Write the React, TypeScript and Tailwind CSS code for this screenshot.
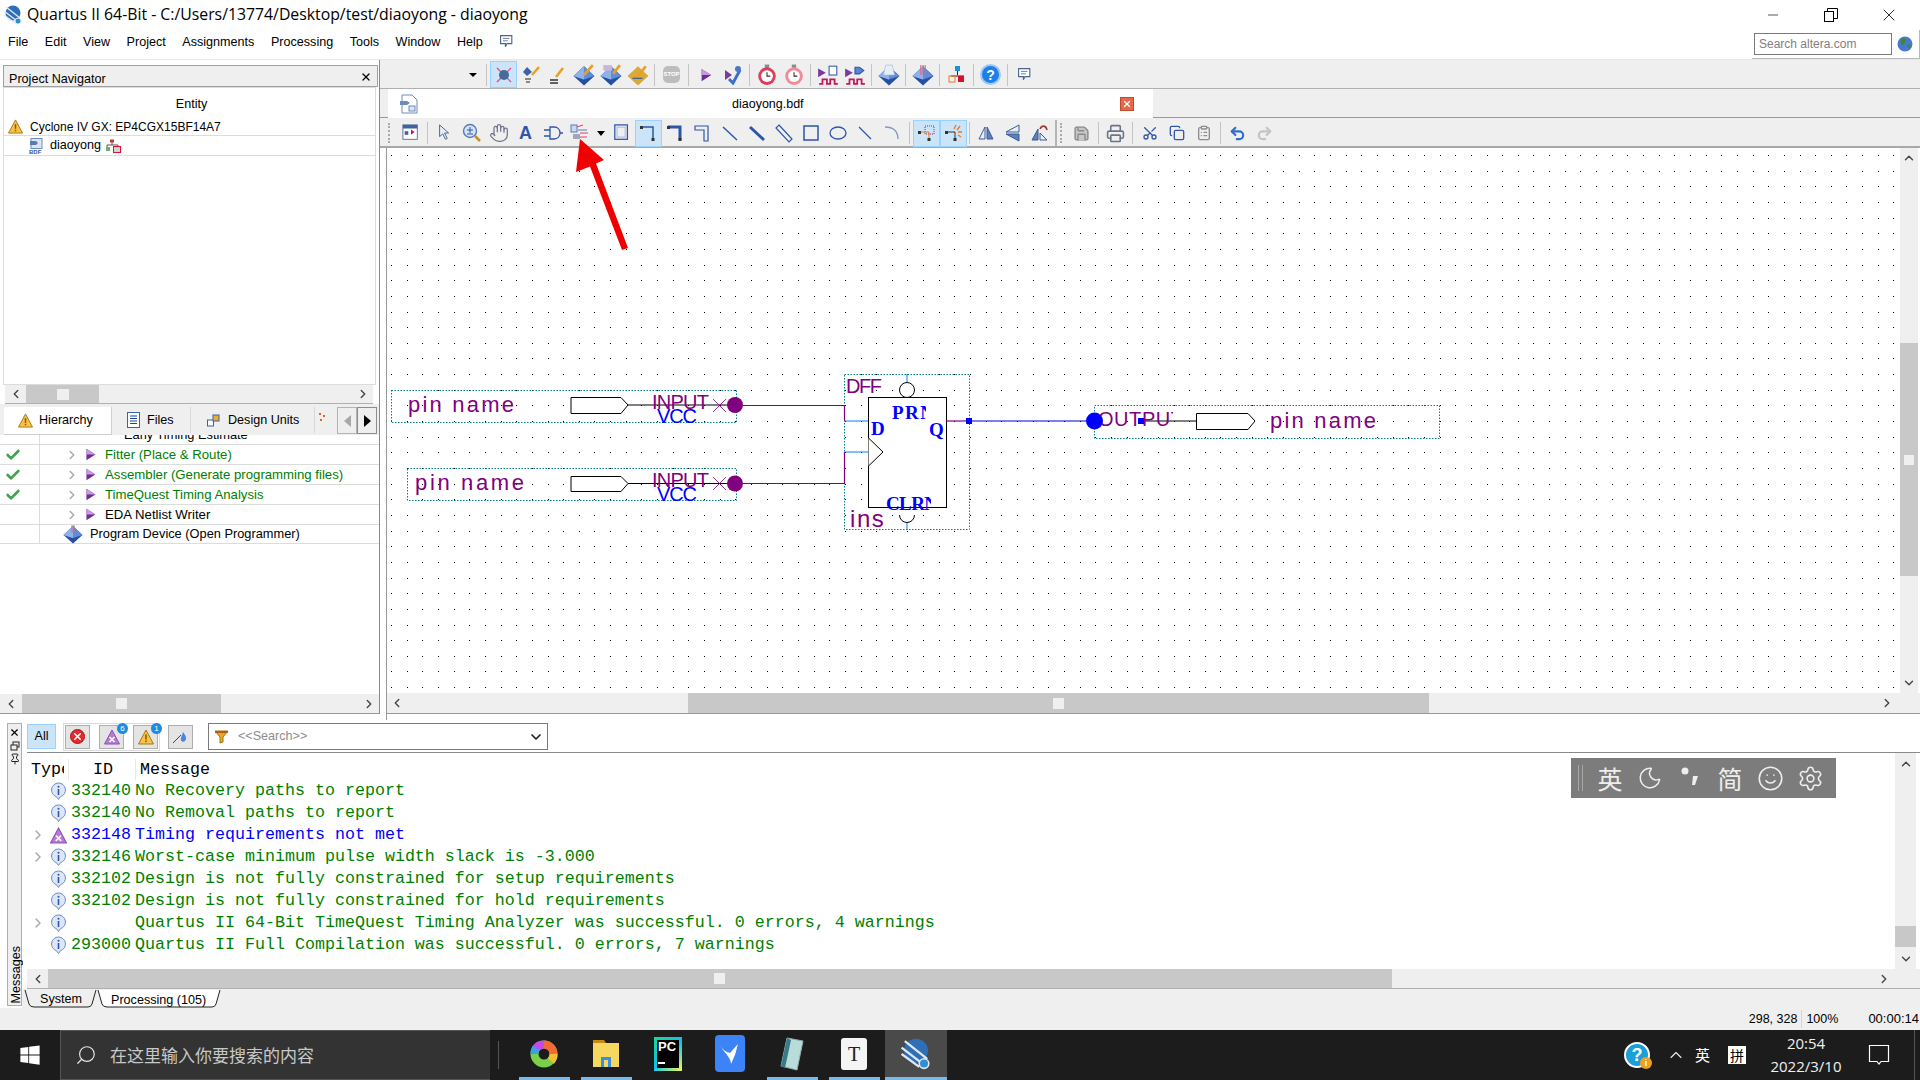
import { Hand, Printer, Scissors, Copy, ClipboardList, Undo2, Redo2, Save, Moon, Smile, Settings, Search, ChevronLeft, ChevronRight, ChevronUp, ChevronDown, X, Minus, Pin, Check } from "lucide-react";
import { FaWindows } from "react-icons/fa";
import type { ReactNode } from "react";

const UI = "font-['Liberation_Sans',sans-serif]";

function Sep() {
  return <div className="w-px h-[22px] bg-[#c4c4c4] mx-[3px] shrink-0" />;
}

function Slot({ children, on, w = "w-[27px]" }: { children: ReactNode; on?: boolean; w?: string }) {
  return (
    <div className={`${w} h-[27px] flex items-center justify-center shrink-0 ${on ? "bg-[#cce4f7] border border-[#99d1ff]" : ""}`}>
      {children}
    </div>
  );
}

function Svg({ children, s = 20 }: { children: ReactNode; s?: number }) {
  return (
    <svg width={s} height={s} viewBox="0 0 20 20" fill="none">
      {children}
    </svg>
  );
}

function Gem({ top, s = 22 }: { top?: ReactNode; s?: number }) {
  return (
    <Svg s={s}>
      <polygon points="10,2 19.500,11 10,19.500 .5,11" fill="#24509f" />
      <polygon points="10,2 19.500,11 10,14 .5,11" fill="#5f8ddc" />
      <polygon points="10,2 10,14 .5,11" fill="#8fb2ea" />
      {top}
    </Svg>
  );
}

function PlayTri({ s = 16 }: { s?: number }) {
  return (
    <svg width={s} height={s} viewBox="0 0 16 16">
      <polygon points="3,1 14,8 3,15" fill="#6d2f94" />
      <polygon points="3,1 14,8 3,8" fill="#c79ae0" />
    </svg>
  );
}

function Clock({ pale }: { pale?: boolean }) {
  return (
    <Svg s={22}>
      <rect x="8" y="0.500" width="4" height="3" fill="#8a8a8a" />
      <circle cx="10" cy="11" r="8" fill={pale ? "#f28a9a" : "#d8405c"} />
      <circle cx="10" cy="11" r="5.400" fill="#fff" />
      <path d="M10 7.500V11H13" stroke="#333" />
    </Svg>
  );
}

function Wave({ children }: { children: ReactNode }) {
  return (
    <Svg s={22}>
      <polygon points="1,4 8,8 1,12" fill="#7a3aa0" />
      {children}
      <path d="M2 18h3v-4h4v4h3v-4h4v4h3" stroke="#c2185b" strokeWidth="1.600" />
    </Svg>
  );
}

function SchemeLine({ kind }: { kind: number }) {
  const blue = "#2f55a8";
  return (
    <Svg>
      {kind === 0 && <path d="M2 4H14V17" stroke={blue} strokeWidth="1.500" />}
      {kind === 1 && <path d="M2 4H14V17" stroke={blue} strokeWidth="3" />}
      {kind === 2 && <path d="M2 3H15V18H11V7H2Z" stroke={blue} strokeWidth="1.200" />}
      {kind === 3 && <path d="M3 4L17 17" stroke={blue} strokeWidth="1.500" />}
      {kind === 4 && <path d="M3 4L17 17" stroke={blue} strokeWidth="3" />}
      {kind === 5 && <path d="M5 2L18 16L15 19L2 5Z" stroke={blue} strokeWidth="1.200" />}
      {kind === 6 && <rect x="3" y="3" width="14" height="14" stroke={blue} strokeWidth="1.500" />}
      {kind === 7 && <ellipse cx="10" cy="10" rx="8" ry="6" stroke={blue} strokeWidth="1.300" />}
      {kind === 8 && <path d="M4 4L16 16" stroke={blue} strokeWidth="1.300" />}
      {kind === 9 && <path d="M3 4C11 4 16 8 16 16" stroke="#8296c4" strokeWidth="1.300" />}
      {kind < 2 && (
        <>
          <rect x="1" y="3" width="3" height="3" fill="#333" />
          <rect x="12.500" y="15" width="3" height="3" fill="#333" />
        </>
      )}
    </Svg>
  );
}

function Toolbar1() {
  return (
    <div className="h-[29px] bg-[#efefef] border-b border-[#b0b0b0] flex items-center shrink-0 pt-[1px]">
      <div className="w-[100px] h-full flex items-center justify-end pr-[3px] shrink-0">
        <div className="w-0 h-0 border-x-[4px] border-x-transparent border-t-[4px] border-t-black" />
      </div>
      <div className="w-px h-[22px] bg-[#c4c4c4] ml-[6px] mr-[3px] shrink-0" />
      <Slot on>
        <Svg>
          <path d="M3 3L17 17M17 3L3 17" stroke="#e8437a" strokeWidth="1.200" />
          <circle cx="10" cy="10" r="5" fill="#476a9c" />
        </Svg>
      </Slot>
      <Slot>
        <Svg>
          <polygon points="6,2 11,7 6,11 2,7" fill="#3d62a8" />
          <path d="M18 2L11 10" stroke="#e8a020" strokeWidth="2.400" />
          <path d="M4 14h6M5 17h4" stroke="#222" />
        </Svg>
      </Slot>
      <Slot w="w-[26px]">
        <Svg>
          <path d="M16 3L9 12" stroke="#e8a020" strokeWidth="2.600" />
          <path d="M3 15h8M3 18h8" stroke="#333" strokeWidth="1.600" />
        </Svg>
      </Slot>
      <Slot>
        <Gem top={<path d="M18 1L10 10" stroke="#e8a020" strokeWidth="2.400" />} />
      </Slot>
      <Slot>
        <Gem top={<><rect x="3" y="1" width="8" height="5" fill="#c9b6d8" /><path d="M18 1L12 9" stroke="#e8a020" strokeWidth="2.400" /></>} />
      </Slot>
      <Slot>
        <Svg s={22}>
          <polygon points="10,2 19.500,11 10,19.500 .5,11" fill="#d9a93c" />
          <path d="M17 2L8 14" stroke="#e8a020" strokeWidth="2.400" />
          <path d="M5 13l9 0" stroke="#2f55a8" />
        </Svg>
      </Slot>
      <Sep />
      <Slot>
        <div className="w-[17px] h-[17px] rounded-[5px] bg-[#bdbdbd] flex items-center justify-center text-white text-[6px] font-bold">STOP</div>
      </Slot>
      <Sep />
      <Slot><PlayTri s={14} /></Slot>
      <Slot>
        <Svg>
          <polygon points="2,5 9,10 2,15" fill="#7a3aa0" />
          <path d="M6 14L10 18L17 5" stroke="#3d70c8" strokeWidth="3" />
          <circle cx="15" cy="4" r="3" fill="#4a78c8" />
        </Svg>
      </Slot>
      <Sep />
      <Slot><Clock /></Slot>
      <Slot><Clock pale /></Slot>
      <Sep />
      <Slot>
        <Wave><rect x="11" y="2" width="7" height="8" fill="#fff" stroke="#3d62a8" /></Wave>
      </Slot>
      <Slot>
        <Wave><path d="M10 3h4l4 3-4 3h-4z" fill="#5a86d0" stroke="#2f55a8" /></Wave>
      </Slot>
      <Sep />
      <Slot>
        <Gem top={<path d="M7 1h6l2 9H5z" fill="#e8eef8" stroke="#a8b8d8" strokeWidth=".6" />} />
      </Slot>
      <Sep />
      <Slot>
        <Gem top={<path d="M8 1v9M10 1v9M12 1v9" stroke="#c8708a" />} />
      </Slot>
      <Sep />
      <Slot>
        <Svg>
          <rect x="8" y="1" width="5" height="5" fill="#1e90d8" />
          <path d="M10.500 6v4M4 11h13" stroke="#222" />
          <rect x="2" y="11" width="6" height="6" fill="none" stroke="#e87a20" />
          <rect x="11" y="11" width="6" height="6" fill="#d81030" />
        </Svg>
      </Slot>
      <Sep />
      <Slot>
        <div className="w-[21px] h-[21px] rounded-full bg-[#1d7fe8] border-2 border-[#9cc8f4] flex items-center justify-center text-white text-[14px] font-bold leading-none">?</div>
      </Slot>
      <Sep />
      <Slot>
        <Svg s={16}>
          <path d="M2 2H16V12H10L8 16V12H2Z" fill="#fff" stroke="#47658f" strokeWidth="1.400" />
          <path d="M5 5.500h8M5 8.500h6" stroke="#47658f" />
        </Svg>
      </Slot>
    </div>
  );
}

function TabRow() {
  return (
    <div className="h-[29px] flex shrink-0 bg-[#efefef] border-b border-[#9a9a9a]">
      <div className="w-[8px] bg-[#efefef]" />
      <div className="w-[765px] bg-white relative flex items-center -mb-px pt-[1px]">
        <div className="ml-[11px]">
          <Svg s={20}>
            <path d="M3 1H13L18 6V19H3Z" fill="#fff" stroke="#6d8cba" />
            <path d="M1 7H8L11 9 8 11H1Z" fill="#6d8cba" />
            <rect x="10" y="12" width="6" height="5" fill="#dbe5f3" stroke="#6d8cba" />
          </Svg>
        </div>
        <span className={`${UI} text-[12.500px] text-black ml-[313px] w-[80px] shrink-0`}>diaoyong.bdf</span>
        <div className="w-[14px] h-[14px] ml-[308px] bg-[#e5694a] border border-[#c24a2e] flex items-center justify-center shrink-0">
          <X size={10} color="#fff" strokeWidth={3} />
        </div>
      </div>
    </div>
  );
}

function Toolbar2() {
  return (
    <div className="h-[30px] bg-[#efefef] border-b-2 border-[#a8a8a8] flex items-center shrink-0 pt-[2px]">
      <div className="w-[13px] shrink-0" />
      <div className="w-[4px] h-[20px] border-l-2 border-dotted border-[#aaa] shrink-0 -ml-[5px] mr-[5px]" />
      <Slot>
        <Svg s={18}>
          <rect x="1" y="1" width="16" height="16" fill="#fff" stroke="#5a6a90" />
          <rect x="1" y="1" width="16" height="4" fill="#3d62a8" />
          <path d="M10 6l4 3-4 3z" fill="#d81050" />
          <rect x="3" y="8" width="4" height="4" fill="#3d62a8" />
        </Svg>
      </Slot>
      <div className="w-px h-[22px] bg-[#c4c4c4] mx-[3px] shrink-0" />
      <Slot>
        <Svg s={18}>
          <path d="M4 1L14 10H9.500L12.500 16L10.500 17L7.500 11L4 14Z" fill="#e8eef8" stroke="#465a86" />
        </Svg>
      </Slot>
      <Slot>
        <Svg>
          <circle cx="8" cy="8" r="6.500" fill="#d4e4f8" stroke="#5a7ab0" strokeWidth="1.400" />
          <path d="M5 7h6M8 4v6M5 11h6" stroke="#2f55a8" />
          <path d="M13 13l5 5" stroke="#c8902a" strokeWidth="2.600" />
        </Svg>
      </Slot>
      <Slot><Hand size={20} color="#6f7787" strokeWidth={1.500} /></Slot>
      <Slot><span className={`${UI} text-[#2f55a8] text-[18px] font-bold leading-none`}>A</span></Slot>
      <Slot>
        <Svg>
          <path d="M7 4H11C15 4 17 7 17 10S15 16 11 16H7ZM1 7H7M1 13H7M17 10H20" stroke="#2f55a8" strokeWidth="1.300" />
        </Svg>
      </Slot>
      <Slot>
        <Svg>
          <rect x="1" y="2" width="6" height="7" fill="#c8d8ee" stroke="#5a7ab0" />
          <rect x="3" y="11" width="7" height="5" fill="#a0a8b8" />
          <path d="M7 4L13 2M10 10H18M10 14H17" stroke="#e04060" />
          <path d="M8 7H17" stroke="#5a7ab0" />
        </Svg>
      </Slot>
      <div className="w-[15px] flex justify-center shrink-0">
        <div className="w-0 h-0 border-x-[4px] border-x-transparent border-t-[5px] border-t-black" />
      </div>
      <div className="w-[27px] flex justify-center shrink-0">
        <Svg s={18}>
          <rect x="2" y="1" width="14" height="16" fill="none" stroke="#2f55a8" strokeWidth="1.400" />
          <rect x="4.500" y="3.500" width="9" height="11" fill="none" stroke="#9fb4d8" />
        </Svg>
      </div>
      <Slot on><SchemeLine kind={0} /></Slot>
      {[1, 2, 3, 4, 5, 6, 7, 8, 9].map((k) => (
        <Slot key={k}><SchemeLine kind={k} /></Slot>
      ))}
      <div className="w-px h-[22px] bg-[#c4c4c4] ml-[4px] mr-[3px] shrink-0" />
      <Slot on>
        <Svg>
          <rect x="8" y="3" width="9" height="8" stroke="#b0205a" strokeDasharray="1 1" />
          <path d="M3 9H12V16" stroke="#e87a20" />
          <rect x="1" y="8" width="3" height="3" fill="#333" />
          <rect x="10.500" y="15" width="3" height="3" fill="#333" />
        </Svg>
      </Slot>
      <Slot on>
        <Svg>
          <path d="M3 9H11V16" stroke="#333" />
          <path d="M12 2L10 6M16 3L13 7M18 9H14M17 14L14 12" stroke="#e87a20" strokeWidth="1.300" />
          <rect x="1" y="8" width="3" height="3" fill="#333" />
          <rect x="9.500" y="15" width="3" height="3" fill="#333" />
        </Svg>
      </Slot>
      <div className="w-px h-[22px] bg-[#c4c4c4] mx-[2px] shrink-0" />
      <Slot>
        <Svg>
          <path d="M9 4L9 16H3Z" fill="#e8eef8" stroke="#3a5a94" />
          <path d="M11 4L11 16H17Z" fill="#5a80c0" stroke="#3a5a94" />
        </Svg>
      </Slot>
      <Slot>
        <Svg>
          <path d="M16 2L3 9H16Z" fill="#e8eef8" stroke="#3a5a94" />
          <path d="M16 18L3 11H16Z" fill="#5a80c0" stroke="#3a5a94" />
        </Svg>
      </Slot>
      <Slot>
        <Svg>
          <path d="M8 6V17H2Z" fill="#5a80c0" stroke="#3a5a94" />
          <path d="M10 17V10L17 17Z" fill="#e8eef8" stroke="#3a5a94" />
          <path d="M10 6C12 2 16 2 17 7" stroke="#a03a28" strokeWidth="1.600" />
        </Svg>
      </Slot>
      <div className="w-[2px] h-full bg-[#b4b4b4] ml-[2px] mr-[3px] shrink-0" />
      <div className="w-[4px] h-[20px] border-l-2 border-dotted border-[#aaa] shrink-0 mr-[4px]" />
      <Slot><Save size={17} color="#8a8a8a" fill="#c8c8c8" /></Slot>
      <div className="w-px h-[22px] bg-[#c4c4c4] mx-[3px] shrink-0" />
      <Slot><Printer size={19} color="#6c7488" /></Slot>
      <div className="w-px h-[22px] bg-[#c4c4c4] mx-[3px] shrink-0" />
      <Slot><Scissors size={16} color="#3558a8" className="-rotate-90" /></Slot>
      <Slot><Copy size={16} color="#3558a8" /></Slot>
      <Slot><ClipboardList size={16} color="#8c8c8c" /></Slot>
      <div className="w-px h-[22px] bg-[#c4c4c4] mx-[3px] shrink-0" />
      <Slot><Undo2 size={17} color="#2f6fd0" strokeWidth={3} /></Slot>
      <Slot><Redo2 size={17} color="#c4c4c4" strokeWidth={3} /></Slot>
    </div>
  );
}

const PIN = "#800080";
const WIRE = "#0000ff";
const TEAL = "#008080";

function DashBox({ x, y, w, h }: { x: number; y: number; w: number; h: number }) {
  return <rect x={x} y={y} width={w} height={h} fill="none" stroke={TEAL} strokeDasharray="1.500 1.500" />;
}

// shapes are given in page coordinates, the viewBox shifts them onto the canvas
function Schematic() {
  const sans = "'Liberation Sans', sans-serif";
  const serif = "'Liberation Serif', serif";
  const dotsX = Array.from({ length: 97 }, (_, i) => Math.round(391 + i * 15.65));
  const dotsY = Array.from({ length: 35 }, (_, i) => Math.round(155 + i * 15.65));
  return (
    <svg className="absolute left-0 top-0" width="1513" height="545" viewBox="387 148 1513 545">
      <defs>
        <clipPath id="clipPrn"><rect x="880" y="400" width="46" height="24" /></clipPath>
        <clipPath id="clipClr"><rect x="880" y="490" width="51" height="24" /></clipPath>
        <clipPath id="clipOut"><rect x="1090" y="405" width="83" height="24" /></clipPath>
        <clipPath id="clipIns"><rect x="845" y="505" width="39" height="30" /></clipPath>
      </defs>

      <path
        d={dotsY.map((y) => dotsX.map((x) => `M${x} ${y}h1v1h-1z`).join("")).join("")}
        fill="#000"
        shapeRendering="crispEdges"
      />

      <DashBox x={391.500} y={390.500} w={345} h={32} />
      <DashBox x={407.500} y={468.500} w={329} h={32} />
      <DashBox x={844.500} y={374.500} w={125} h={155} />
      <DashBox x={1094.500} y={405.500} w={345} h={33} />

      <g fontFamily={sans} fontSize="22" fill={PIN}>
        <text x="408" y="412" textLength="106">pin name</text>
        <text x="415" y="490" textLength="109">pin name</text>
        <text x="1270" y="428" textLength="106">pin name</text>
      </g>

      <path d="M628 405H735M628 483.500H735M1141 421H1196" stroke="#000" strokeWidth="1" />
      <path d="M571 397.500H621L628 405L621 413.500H571Z" fill="#fff" stroke="#000" />
      <path d="M571 476.500H621L628 483.500L621 491.500H571Z" fill="#fff" stroke="#000" />
      <path d="M1196.500 413.500H1248L1255 421L1248 429.500H1196.500Z" fill="#fff" stroke="#000" />

      <g fontFamily={sans} fontSize="20" fill={PIN}>
        <text x="652" y="409" textLength="57">INPUT</text>
        <text x="652" y="487" textLength="57">INPUT</text>
        <text x="1098" y="426" textLength="85" clipPath="url(#clipOut)">OUTPUT</text>
        <text x="846" y="393" textLength="36">DFF</text>
        <text x="850" y="527" fontSize="24" textLength="42" clipPath="url(#clipIns)">inst</text>
      </g>
      <g fontFamily={sans} fontSize="20" fill={WIRE}>
        <text x="657" y="423" textLength="40">VCC</text>
        <text x="657" y="501" textLength="40">VCC</text>
      </g>

      <path d="M713 399L726 412M726 399L713 412M713 477L726 490M726 477L713 490" stroke={PIN} strokeWidth="0.800" />
      <circle cx="735" cy="405" r="8" fill={PIN} />
      <circle cx="735" cy="483.500" r="8" fill={PIN} />
      <path d="M743 405.500H844.500V421M743 483.500H844.500V452" stroke={PIN} strokeWidth="1.200" fill="none" />
      <path d="M844.500 421H868M844.500 452H868M907 374V382M907 522V530" stroke="#0080ff" strokeWidth="1" />

      <rect x="868.500" y="397.500" width="78" height="110" fill="#fff" stroke="#000" strokeWidth="1" />
      <path d="M868.500 438L883 452L868.500 466" fill="#fff" stroke="#000" />
      <circle cx="907" cy="390" r="7.500" fill="#fff" stroke="#000" />
      <path d="M899.500 515a7.500 7.500 0 0 0 15 0" fill="#fff" stroke="#000" />

      <g fontFamily={serif} fontSize="19" fontWeight="700" fill={WIRE}>
        <text x="892" y="419" textLength="42" clipPath="url(#clipPrn)">PRN</text>
        <text x="886" y="510" textLength="52" clipPath="url(#clipClr)">CLRN</text>
        <text x="871" y="435">D</text>
        <text x="929" y="436" textLength="15">Q</text>
      </g>

      <path d="M946.500 421H969" stroke={PIN} strokeWidth="1.200" />
      <path d="M969 421H1094" stroke="#0000d8" strokeWidth="1.200" />
      <rect x="966" y="418" width="6" height="6" fill={WIRE} />
      <circle cx="1094.500" cy="421" r="8.500" fill={WIRE} />
      <rect x="1138" y="418" width="6" height="6" fill={WIRE} />
    </svg>
  );
}

function Warn({ s = 16 }: { s?: number }) {
  return (
    <svg width={s} height={s} viewBox="0 0 16 16">
      <polygon points="8,1 15.500,15 .5,15" fill="#f6c343" stroke="#a8761a" />
      <path d="M8 5.500v5" stroke="#8a5a10" strokeWidth="1.600" />
      <rect x="7.200" y="11.500" width="1.600" height="1.600" fill="#8a5a10" />
    </svg>
  );
}

function CritIcon({ s = 16 }: { s?: number }) {
  return (
    <svg width={s} height={s} viewBox="0 0 16 16">
      <polygon points="8,1 15.500,15 .5,15" fill="#b77ad8" stroke="#8a50b0" />
      <path d="M5.500 8l5 5M10.500 8l-5 5" stroke="#fff" strokeWidth="1.500" />
    </svg>
  );
}

function InfoIcon() {
  return (
    <svg width="17" height="18" viewBox="0 0 17 18">
      <path d="M8.500 1a7 7 0 0 1 2 13.700L8.500 17.500 6.500 14.700A7 7 0 0 1 8.500 1Z" fill="#dbe6f7" stroke="#6d8cba" />
      <circle cx="8.500" cy="4.800" r="1" fill="#2f55a8" />
      <path d="M8.500 7v6" stroke="#2f55a8" strokeWidth="1.600" />
    </svg>
  );
}

function LeftPanel() {
  const tasks = [
    { text: "Fitter (Place & Route)", ok: true },
    { text: "Assembler (Generate programming files)", ok: true },
    { text: "TimeQuest Timing Analysis", ok: true },
    { text: "EDA Netlist Writer", ok: false },
  ];
  return (
    <div className={`w-[380px] h-full border-r border-[#8a8a8a] flex flex-col shrink-0 ${UI} text-[12.600px] text-black`}>
      <div className="h-[5px] shrink-0" />
      <div className="h-[22px] mx-[3px] w-[375px] bg-[#efefef] border border-[#a0a0a0] flex items-end justify-between px-[5px] shrink-0">
        <span className="leading-[14px]">Project Navigator</span>
        <X size={12} color="#000" strokeWidth={2.500} className="mb-[3px]" />
      </div>
      <div className="h-[298px] ml-[3px] w-[373px] border border-[#dcdcdc] flex flex-col shrink-0">
        <div className="h-[30px] flex items-center justify-center shrink-0 pt-[2px] pl-[4px]">Entity</div>
        <div className="h-[18px] border-b border-[#dcdcdc] flex items-center pl-[4px] shrink-0">
          <Warn s={15} />
          <span className="ml-[7px] text-[12px]">Cyclone IV GX: EP4CGX15BF14A7</span>
        </div>
        <div className="h-[20px] border-b border-[#dcdcdc] flex items-center pl-[25px] shrink-0">
          <svg width="15" height="16" viewBox="0 0 15 16">
            <rect x="2" y="0.500" width="11" height="10" fill="#dbe5f3" stroke="#6d8cba" />
            <path d="M1 3H7L9 5 7 7H1Z" fill="#5a7ab0" />
            <text x="0" y="16" fontSize="6" fontWeight="700" fill="#2f55a8" fontFamily="Liberation Sans">BDF</text>
          </svg>
          <span className="ml-[6px]">diaoyong</span>
          <svg className="ml-[5px]" width="15" height="14" viewBox="0 0 15 14">
            <rect x="4" y="0.500" width="4" height="3" fill="#c0392b" />
            <path d="M6 3.500V6M1 8V6H12V8" stroke="#555" fill="none" />
            <rect x="0" y="8" width="4" height="4" fill="#7aa87a" />
            <rect x="7.500" y="7.500" width="7" height="6" fill="#cdd8c8" stroke="#e0103a" />
          </svg>
        </div>
      </div>
      <div className="ml-[5px] w-[368px] h-[19px] bg-[#efefef] flex items-center border-b border-[#b0b0b0] shrink-0">
        <div className="w-[21px] flex justify-center"><ChevronLeft size={14} color="#444" strokeWidth={2.400} /></div>
        <div className="w-[73px] self-stretch bg-[#c8c8c8] flex items-center justify-center"><div className="w-[12px] h-[11px] bg-[#efefef]" /></div>
        <div className="flex-1" />
        <div className="w-[20px] flex justify-center"><ChevronRight size={14} color="#444" strokeWidth={2.400} /></div>
      </div>
      <div className="h-[31px] flex bg-[#efefef] shrink-0 pl-[4px] pt-[3px]">
        <div className="w-[108px] h-[28px] bg-white border-r border-b border-[#cfcfcf] flex items-center pl-[14px] gap-[6px]">
          <Warn s={15} />
          <span>Hierarchy</span>
        </div>
        <div className="w-[79px] h-[26px] border-r border-[#d8d8d8] flex items-center pl-[15px] gap-[7px]">
          <svg width="13" height="16" viewBox="0 0 13 16">
            <rect x="0.500" y="0.500" width="12" height="15" fill="#fff" stroke="#3d62a8" />
            <path d="M3 4h7M3 6.500h7M3 9h7M3 11.500h7" stroke="#1a3f98" />
          </svg>
          <span>Files</span>
        </div>
        <div className="w-[124px] h-[26px] border-r border-[#d8d8d8] flex items-center pl-[16px] gap-[8px]">
          <svg width="13" height="13" viewBox="0 0 13 13">
            <rect x="0.500" y="6" width="6" height="6" fill="#fff" stroke="#3d62a8" />
            <rect x="6" y="1" width="6" height="6" fill="#e8b030" stroke="#3d62a8" />
          </svg>
          <span>Design Units</span>
        </div>
        <div className="w-[22px] h-[26px] pl-[3px] pt-[5px]">
          <svg width="9" height="10" viewBox="0 0 9 10">
            <path d="M1 1h2v2H1zM5 3h2v2H5zM2 7h2v2H2z" fill="#e0602a" />
          </svg>
        </div>
        <div className="w-[20px] h-[27px] bg-[#efefef] border border-[#b4b4b4] flex items-center justify-center">
          <div className="w-0 h-0 border-y-[6px] border-y-transparent border-r-[7px] border-r-[#a8a8a8]" />
        </div>
        <div className="w-[20px] h-[27px] bg-[#efefef] border border-[#8c8c8c] flex items-center justify-center">
          <div className="w-0 h-0 border-y-[6px] border-y-transparent border-l-[7px] border-l-black" />
        </div>
      </div>
      <div className="h-[10px] flex border-b border-[#dcdcdc] overflow-hidden items-start shrink-0">
        <div className="w-[40px] h-full border-r border-[#dcdcdc] shrink-0" />
        <span className="ml-[84px] -mt-[10px] leading-[20px] text-[12.800px]">Early Timing Estimate</span>
      </div>
      {tasks.map((t) => (
        <div key={t.text} className="h-[20px] flex items-center border-b border-[#dcdcdc] shrink-0 text-[13.200px]">
          <div className="w-[40px] h-full border-r border-[#dcdcdc] flex items-center pl-[5px] shrink-0">
            {t.ok && <Check size={16} color="#3fa34d" strokeWidth={4} />}
          </div>
          <div className="w-[25px] ml-[19px] flex justify-center shrink-0"><ChevronRight size={14} color="#a8a8a8" strokeWidth={2.400} /></div>
          <div className="w-[21px] shrink-0"><PlayTri s={13} /></div>
          <span className={t.ok ? "text-[#008000]" : "text-black"}>{t.text}</span>
        </div>
      ))}
      <div className="h-[19px] flex items-center border-b border-[#dcdcdc] shrink-0 text-[12.800px]">
        <div className="w-[40px] h-full border-r border-[#dcdcdc] shrink-0" />
        <div className="w-[20px] ml-[23px] shrink-0"><Gem s={20} top={<path d="M9 1v8M11 1v8" stroke="#c8708a" />} /></div>
        <span className="ml-[7px]">Program Device (Open Programmer)</span>
      </div>
      <div className="flex-1" />
      <div className="h-[20px] bg-[#efefef] flex items-center border-b border-[#9a9a9a] shrink-0">
        <div className="w-[22px] flex justify-center shrink-0"><ChevronLeft size={14} color="#444" strokeWidth={2.400} /></div>
        <div className="w-[199px] self-stretch bg-[#c8c8c8] flex items-center shrink-0"><div className="ml-[94px] w-[11px] h-[11px] bg-[#efefef]" /></div>
        <div className="flex-1" />
        <div className="w-[20px] flex justify-center shrink-0"><ChevronRight size={14} color="#444" strokeWidth={2.400} /></div>
      </div>
      <div className="h-[6px] shrink-0 -mr-px bg-white" />
    </div>
  );
}

function CanvasArea() {
  return (
    <div className="flex-1 flex flex-col min-h-0 border-l border-[#9a9a9a] ml-[6px]">
      <div className="flex-1 flex min-h-0">
        <div className="flex-1 relative overflow-hidden bg-white">
          <Schematic />
        </div>
        <div className="w-[18px] bg-[#efefef] flex flex-col items-center shrink-0 mr-[2px]">
          <ChevronUp size={14} color="#444" strokeWidth={2.400} className="mt-[3px]" />
          <div className="h-[178px] shrink-0" />
          <div className="w-full h-[233px] bg-[#c8c8c8] flex items-center justify-center"><div className="w-[10px] h-[10px] bg-[#efefef]" /></div>
          <div className="flex-1" />
          <ChevronDown size={14} color="#444" strokeWidth={2.400} className="mb-[3px]" />
        </div>
      </div>
      <div className="h-[21px] bg-[#efefef] flex items-center border-b border-[#9a9a9a] shrink-0">
        <div className="w-[20px] flex justify-center shrink-0"><ChevronLeft size={14} color="#444" strokeWidth={2.400} /></div>
        <div className="w-[281px] shrink-0" />
        <div className="w-[741px] self-stretch bg-[#c8c8c8] flex items-center justify-center shrink-0"><div className="w-[11px] h-[11px] bg-[#efefef]" /></div>
        <div className="flex-1" />
        <div className="w-[20px] flex justify-center shrink-0 mr-[23px]"><ChevronRight size={14} color="#444" strokeWidth={2.400} /></div>
      </div>
      <div className="h-[6px] shrink-0" />
    </div>
  );
}

const MESSAGES = [
  { id: "332140", text: "No Recovery paths to report", kind: "info" },
  { id: "332140", text: "No Removal paths to report", kind: "info" },
  { id: "332148", text: "Timing requirements not met", kind: "crit", more: true },
  { id: "332146", text: "Worst-case minimum pulse width slack is -3.000", kind: "info", more: true },
  { id: "332102", text: "Design is not fully constrained for setup requirements", kind: "info" },
  { id: "332102", text: "Design is not fully constrained for hold requirements", kind: "info" },
  { id: "", text: "Quartus II 64-Bit TimeQuest Timing Analyzer was successful. 0 errors, 4 warnings", kind: "info", more: true },
  { id: "293000", text: "Quartus II Full Compilation was successful. 0 errors, 7 warnings", kind: "info" },
];

function Messages() {
  const btn = "w-[25px] h-[24px] bg-[#e4e4e4] border border-[#aeaeae] flex items-center justify-center relative";
  const badge = "absolute -top-[3px] -right-[5px] w-[11px] h-[11px] rounded-full bg-[#1d8ce0] text-white text-[8px] leading-[11px] text-center";
  return (
    <div className="h-[288px] bg-white flex shrink-0">
      <div className="ml-[7px] mt-[3px] w-[15px] h-[283px] bg-[#efefef] border border-[#aeaeae] flex flex-col items-center shrink-0 pt-[3px] relative">
        <X size={11} color="#000" strokeWidth={2.400} />
        <svg className="mt-[3px]" width="10" height="10" viewBox="0 0 10 10">
          <rect x="3" y="1" width="6" height="5" fill="none" stroke="#222" />
          <rect x="1" y="4" width="6" height="5" fill="#efefef" stroke="#222" />
        </svg>
        <Pin size={12} color="#222" className="mt-[2px]" />
        <span className={`${UI} absolute bottom-[2px] left-[1px] text-[12.600px] text-black [writing-mode:vertical-rl] rotate-180 leading-[14px]`}>Messages</span>
      </div>
      <div className="flex-1 flex flex-col ml-[5px] min-w-0">
        <div className="h-[33px] flex items-center shrink-0 border-b border-[#8a8a8a] pt-[1px]">
          <div className={`${UI} w-[29px] h-[25px] bg-[#cce4f7] border border-[#99d1ff] flex items-center justify-center text-[12.600px] text-black shrink-0`}>All</div>
          <div className="flex gap-[9px] ml-[7px] p-[1px] border border-[#dcdcdc] shrink-0">
            <div className={btn}>
              <div className="w-[15px] h-[15px] rounded-full bg-[#e8262e] border border-[#a81818] flex items-center justify-center"><X size={11} color="#fff" strokeWidth={3.500} /></div>
            </div>
            <div className={btn}><CritIcon /><div className={badge}>6</div></div>
            <div className={btn}><Warn /><div className={badge}>1</div></div>
          </div>
          <div className={`${btn} ml-[8px] shrink-0`}>
            <svg width="17" height="15" viewBox="0 0 17 15">
              <path d="M1 14L9 6" stroke="#444" />
              <path d="M11 3C14 7 15 9 13 12C11 14 8 12 9 9Z" fill="#4a86e0" />
            </svg>
          </div>
          <div className="w-[340px] h-[27px] ml-[15px] border border-[#7a7a7a] flex items-center pl-[5px] pr-[3px] shrink-0">
            <svg width="15" height="14" viewBox="0 0 15 14">
              <path d="M1 1H14L9 7V12L6 13V7Z" fill="#e8a820" stroke="#a87010" />
              <rect x="1" y="1" width="13" height="2" fill="#b85a10" />
            </svg>
            <span className={`${UI} ml-[9px] text-[12.600px] text-[#8c8c8c] flex-1`}>{"<<Search>>"}</span>
            <ChevronDown size={16} color="#222" strokeWidth={2.600} />
          </div>
        </div>
        <div className="flex-1 flex min-h-0">
          <div className="flex-1 flex flex-col font-['Liberation_Mono',monospace] text-[16.670px] leading-[22px] min-w-0 overflow-hidden whitespace-pre">
            <div className="h-[27px] flex items-center text-black shrink-0 ml-[4px] pt-[6px]">
              <span className="w-[33px] overflow-hidden">Type</span>
              <div className="w-px h-full bg-[#e8e8e8] ml-[4px] shrink-0" />
              <span className="ml-[24px] w-[42px]">ID</span>
              <div className="w-px h-full bg-[#e8e8e8] shrink-0" />
              <span className="ml-[4px]">Message</span>
            </div>
            {MESSAGES.map((m, i) => (
              <div key={i} className={`h-[22px] flex items-center shrink-0 ${m.kind === "crit" ? "text-[#0000ff]" : "text-[#008000]"}`}>
                <div className="w-[21px] pl-[3px] shrink-0">
                  {m.more && <ChevronRight size={16} color="#a8a8a8" strokeWidth={2.200} />}
                </div>
                <div className="w-[20px] flex justify-center shrink-0">
                  {m.kind === "crit" ? <CritIcon s={17} /> : <InfoIcon />}
                </div>
                <span className="w-[64px] ml-[3px] shrink-0">{m.id}</span>
                <span>{m.text}</span>
              </div>
            ))}
          </div>
          <div className="w-[21px] bg-[#efefef] flex flex-col items-center shrink-0 mr-[4px]">
            <ChevronUp size={14} color="#444" strokeWidth={2.400} className="mt-[4px]" />
            <div className="flex-1" />
            <div className="w-full h-[21px] bg-[#c8c8c8]" />
            <div className="h-[5px]" />
            <ChevronDown size={14} color="#444" strokeWidth={2.400} className="mb-[3px]" />
          </div>
        </div>
        <div className="h-[20px] bg-[#efefef] flex items-center border-b border-[#b0b0b0] shrink-0">
          <div className="w-[21px] flex justify-center shrink-0"><ChevronLeft size={14} color="#444" strokeWidth={2.400} /></div>
          <div className="w-[1344px] self-stretch bg-[#c8c8c8] flex items-center shrink-0"><div className="ml-[666px] w-[11px] h-[11px] bg-[#efefef]" /></div>
          <div className="flex-1" />
          <div className="w-[20px] flex justify-center shrink-0 mr-[26px]"><ChevronRight size={14} color="#444" strokeWidth={2.400} /></div>
        </div>
        <div className={`${UI} h-[19px] flex items-start text-[12.600px] text-black shrink-0 relative bg-[#efefef] -ml-[5px] pl-[5px] pt-[3px]`}>
          <svg className="absolute -left-[22px] top-[1px]" width="230" height="18" viewBox="0 0 230 18">
            <path d="M25 0L29 14Q30 17 34 17H88Q91 17 92 14L96 0" fill="#efefef" stroke="#222" />
            <path d="M98 0L102 14Q103 17 107 17H212Q215 17 216 14L220 0" fill="#fff" stroke="#222" />
          </svg>
          <span className="relative ml-[13px] w-[71px] leading-[15px]">System</span>
          <span className="relative leading-[16px]">Processing (105)</span>
        </div>
      </div>
    </div>
  );
}

function ChromeLike() {
  return (
    <svg width="30" height="32" viewBox="0 0 30 32">
      <g fill="none" strokeWidth="8">
        <circle cx="15" cy="16" r="9.500" stroke="#7ad04a" />
        <path d="M15 6.500A9.500 9.500 0 0 1 24.500 16" stroke="#f4683a" />
        <path d="M6.500 11A9.500 9.500 0 0 1 15 6.500" stroke="#c24ae8" />
        <path d="M5.500 16A9.500 9.500 0 0 1 7 10" stroke="#3aa0e8" />
        <path d="M22 23A9.500 9.500 0 0 0 24.500 16" stroke="#f4c030" />
      </g>
    </svg>
  );
}

function QuartusLogo({ s = 20 }: { s?: number }) {
  return (
    <svg width={s} height={s} viewBox="0 0 20 20">
      <circle cx="10" cy="8" r="7.500" fill="#2f6fb8" />
      <path d="M1 6L14 16M1 10L12 18M3 2L17 13" stroke="#dfe9f5" strokeWidth="1.400" />
      <circle cx="15" cy="16" r="3" fill="#2f8fd0" stroke="#dfe9f5" />
    </svg>
  );
}

function TaskSlot({ children, open, active }: { children: ReactNode; open?: boolean; active?: boolean }) {
  return (
    <div className={`w-[62px] h-full flex flex-col items-center shrink-0 ${active ? "bg-[#4a4a4a]" : ""}`}>
      <div className="flex-1 flex items-center justify-center">{children}</div>
      <div className={`h-[3px] mx-auto ${active ? "w-full" : "w-[51px]"} ${open ? "bg-[#76b9ed]" : ""}`} />
    </div>
  );
}

function Taskbar() {
  return (
    <div className="h-[50px] bg-[#1c1c1c] flex items-center shrink-0 relative">
      <div className="w-[60px] flex justify-center shrink-0"><FaWindows size={22} color="#fff" /></div>
      <div className="w-[430px] h-full bg-[#333333] border-t border-l border-[#555] border-b flex items-center pl-[14px] shrink-0">
        <Search size={22} color="#e4e4e4" strokeWidth={1.300} className="-scale-x-100" />
        <span className="ml-[13px] text-[17px] text-[#c8c8c8] font-['Noto_Sans_CJK_SC',sans-serif]">在这里输入你要搜索的内容</span>
      </div>
      <div className="w-px h-[28px] bg-[#555] ml-[8px] shrink-0" />
      <div className="w-[14px] shrink-0" />
      <TaskSlot open><ChromeLike /></TaskSlot>
      <TaskSlot open>
        <svg width="28" height="30" viewBox="0 0 28 30">
          <path d="M1 1H12L14 4H1Z" fill="#c98a10" />
          <rect x="1" y="4" width="26" height="24" fill="#f6d860" />
          <path d="M9 28V18H19V28H16V21H12V28Z" fill="#3a90e0" />
        </svg>
      </TaskSlot>
      <TaskSlot>
        <div className="w-[28px] h-[34px] bg-[linear-gradient(135deg,#21d789,#07c3f2,#fcf84a)] p-[3px]">
          <div className="w-full h-full bg-black text-white text-[13px] font-bold leading-[14px] pl-[1px] font-['Liberation_Sans',sans-serif]">PC<div className="w-[7px] h-[2px] bg-white mt-[8px]" /></div>
        </div>
      </TaskSlot>
      <TaskSlot>
        <div className="w-[30px] h-[37px] rounded-[4px] bg-[#3b83f6] flex items-center justify-center">
          <svg width="22" height="24" viewBox="0 0 22 24">
            <path d="M1 4C5 9 8 10 11 11L19 2L16 13L12 22C12 17 8 13 1 4Z" fill="#fff" />
          </svg>
        </div>
      </TaskSlot>
      <TaskSlot open>
        <svg width="26" height="36" viewBox="0 0 26 36">
          <path d="M8 2L24 5L18 34L2 30Z" fill="#b8dcd8" stroke="#8ab0b0" />
          <path d="M8 2L2 30L6 32L12 4Z" fill="#3a7a88" />
        </svg>
      </TaskSlot>
      <TaskSlot open>
        <div className="w-[26px] h-[32px] bg-[#f4f4f4] rounded-[3px] flex items-center justify-center text-[#222] text-[20px] font-['Liberation_Serif',serif]">T</div>
      </TaskSlot>
      <TaskSlot open active><QuartusLogo s={32} /></TaskSlot>
      <div className="flex-1" />
      <div className="relative w-[26px] h-[26px] rounded-full bg-[#1a9fd8] border-2 border-white flex items-center justify-center text-white text-[18px] font-bold shrink-0 font-['Liberation_Sans',sans-serif]">
        ?
        <div className="absolute -right-[4px] -bottom-[3px] w-[12px] h-[12px] rounded-full bg-[#f0a020] text-white text-[9px] leading-[12px] text-center">i</div>
      </div>
      <ChevronUp size={20} color="#e8e8e8" strokeWidth={1.400} className="ml-[16px] shrink-0" />
      <span className="ml-[9px] text-[15px] text-white font-['Noto_Sans_CJK_SC',sans-serif] shrink-0">英</span>
      <div className="ml-[18px] w-[18px] h-[18px] bg-white text-black text-[14px] leading-[18px] text-center font-['Noto_Sans_CJK_SC',sans-serif] shrink-0">拼</div>
      <div className="w-[90px] ml-[15px] flex flex-col items-center text-[#f0f0f0] text-[15px] leading-[23px] shrink-0 font-['Open_Sans',sans-serif]">
        <span>20:54</span>
        <span>2022/3/10</span>
      </div>
      <svg className="ml-[17px] shrink-0" width="22" height="22" viewBox="0 0 22 22">
        <path d="M1.500 1.500H20.500V17.500H13L11 20 9 17.500H1.500Z" fill="none" stroke="#fff" strokeWidth="1.200" />
      </svg>
      <div className="w-px h-full bg-[#555] ml-[24px] shrink-0" />
      <div className="w-[5px]" />
    </div>
  );
}

export default function App() {
  return (
    <div className={`w-[1920px] h-[1080px] overflow-hidden relative flex flex-col bg-white ${UI}`}>
      <div className="h-[30px] flex items-center pl-[3px] shrink-0">
        <QuartusLogo s={20} />
        <span className="ml-[4px] text-[15.800px] text-black font-['Open_Sans',sans-serif]">Quartus II 64-Bit - C:/Users/13774/Desktop/test/diaoyong - diaoyong</span>
        <div className="flex-1" />
        <Minus size={16} color="#000" strokeWidth={1} />
        <svg className="ml-[43px]" width="14" height="14" viewBox="0 0 14 14">
          <rect x="0.500" y="3.500" width="9" height="10" fill="none" stroke="#000" />
          <path d="M3.500 3.500V0.500H13.500V10.500H9.500" fill="none" stroke="#000" />
        </svg>
        <X size={20} color="#000" strokeWidth={1} className="ml-[41px] mr-[21px]" />
      </div>
      <div className="h-[30px] flex items-center text-[12.600px] text-black shrink-0 border-b border-[#e8e8e8]">
        <div className="flex items-center pl-[8px] gap-[16.500px] pb-[5px]">
          <span>File</span>
          <span>Edit</span>
          <span>View</span>
          <span>Project</span>
          <span>Assignments</span>
          <span>Processing</span>
          <span>Tools</span>
          <span>Window</span>
          <span>Help</span>
          <Svg s={16}>
            <path d="M2 2H16V12H10L8 16V12H2Z" fill="#fff" stroke="#47658f" strokeWidth="1.400" />
            <path d="M5 5.500h8M5 8.500h6" stroke="#47658f" />
          </Svg>
        </div>
        <div className="flex-1" />
        <div className="h-full flex items-center border-b border-r border-[#b8b8b8] pl-[2px] shrink-0">
          <div className="w-[138px] h-[22px] border border-[#7a7a7a] flex items-center pl-[4px] text-[12px] text-[#808080] shrink-0">Search altera.com</div>
          <svg className="ml-[5px] mr-[6px] shrink-0" width="16" height="18" viewBox="0 0 16 18">
            <circle cx="8" cy="9" r="7.500" fill="#4a78d0" />
            <path d="M3 4L8 3L9 7L5 11ZM10 10L14 9L12 15Z" fill="#3a8a3a" />
          </svg>
        </div>
      </div>
      <div className="h-[660px] flex shrink-0">
        <LeftPanel />
        <div className="flex-1 flex flex-col min-w-0">
          <Toolbar1 />
          <TabRow />
          <Toolbar2 />
          <CanvasArea />
        </div>
      </div>
      <Messages />
      <div className="h-[22px] bg-[#efefef] flex items-center justify-end text-[12.500px] text-black shrink-0">
        <span>298, 328</span>
        <div className="w-px h-[18px] bg-[#d4d4d4] mx-[4px]" />
        <span>100%</span>
        <span className="ml-[30px] mr-[1px] text-[13px]">00:00:14</span>
      </div>
      <Taskbar />

      <svg className="absolute left-[570px] top-[135px]" width="70" height="120" viewBox="570 135 70 120">
        <polygon points="580,139 576,172 590,166.500 622,250 628,248 596,163.500 604,160" fill="#f00000" />
      </svg>

      <div className="absolute left-[1571px] top-[758px] w-[265px] h-[40px] bg-[#7c7c7c] flex items-center text-[#eeeeee] font-['Noto_Sans_CJK_SC',sans-serif]">
        <div className="ml-[7px] w-[5px] h-[26px] border-x border-[#a8a8a8] shrink-0" />
        <div className="ml-[7px] w-[40px] flex justify-center text-[25px] leading-none shrink-0">英</div>
        <div className="w-[40px] flex justify-center shrink-0"><Moon size={26} strokeWidth={1.400} className="rotate-[8deg]" /></div>
        <div className="w-[40px] flex justify-center shrink-0">
          <svg width="20" height="24" viewBox="0 0 20 24">
            <circle cx="5" cy="5" r="3.500" fill="#eee" />
            <path d="M13 10h5l-3 9h-3z" fill="#eee" />
          </svg>
        </div>
        <div className="w-[40px] flex justify-center text-[25px] leading-none shrink-0">简</div>
        <div className="w-[40px] flex justify-center shrink-0"><Smile size={27} strokeWidth={1.400} /></div>
        <div className="w-[40px] flex justify-center shrink-0"><Settings size={27} strokeWidth={1.400} /></div>
      </div>
    </div>
  );
}
